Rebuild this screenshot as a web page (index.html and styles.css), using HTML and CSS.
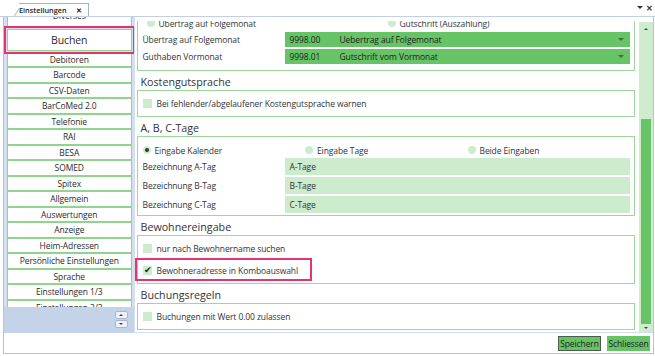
FILE: index.html
```html
<!DOCTYPE html>
<html lang="de">
<head>
    <meta charset="UTF-8">
    <title>Einstellungen</title>
    <link rel="stylesheet" href="styles.css">
</head>
<body>
    <div class="tabbar">
        <div class="tab">Einstellungen <span class="tab-close">✕</span></div>
        <div class="tab-tools"><span class="tools-arrow"></span> ✕</div>
    </div>

    <div class="window">
        <div class="panes">
            <aside class="sidebar">
                <div class="nav">
                    <div class="nav-list">
                        <div class="nav-item partial">Diverses</div>
                        <div class="nav-item active">Buchen</div>
                        <div class="nav-item">Debitoren</div>
                        <div class="nav-item">Barcode</div>
                        <div class="nav-item">CSV-Daten</div>
                        <div class="nav-item">BarCoMed 2.0</div>
                        <div class="nav-item">Telefonie</div>
                        <div class="nav-item">RAI</div>
                        <div class="nav-item">BESA</div>
                        <div class="nav-item">SOMED</div>
                        <div class="nav-item">Spitex</div>
                        <div class="nav-item">Allgemein</div>
                        <div class="nav-item">Auswertungen</div>
                        <div class="nav-item">Anzeige</div>
                        <div class="nav-item">Heim-Adressen</div>
                        <div class="nav-item">Persönliche Einstellungen</div>
                        <div class="nav-item">Sprache</div>
                        <div class="nav-item">Einstellungen 1/3</div>
                        <div class="nav-item">Einstellungen 2/3</div>
                    </div>
                </div>
                <div class="nav-scroll">
                    <button class="nav-btn"><span class="tri-up"></span></button>
                    <button class="nav-btn"><span class="tri-down"></span></button>
                </div>
            </aside>

            <div class="content">
                <div class="scroll-area">
                    <div class="scroll-inner">
                        <div class="group first-group">
                            <div class="radio-row top-radios">
                                <label class="radio"><span class="dot"></span>Übertrag auf Folgemonat</label>
                                <label class="radio"><span class="dot"></span>Gutschrift (Auszahlung)</label>
                            </div>
                            <div class="field-row">
                                <span class="label">Übertrag auf Folgemonat</span>
                                <div class="combo">
                                    <span class="combo-code">9998.00</span>
                                    <span class="combo-text">Uebertrag auf Folgemonat</span>
                                    <span class="combo-arrow"></span>
                                </div>
                            </div>
                            <div class="field-row">
                                <span class="label">Guthaben Vormonat</span>
                                <div class="combo">
                                    <span class="combo-code">9998.01</span>
                                    <span class="combo-text">Gutschrift vom Vormonat</span>
                                    <span class="combo-arrow"></span>
                                </div>
                            </div>
                        </div>

                        <h2 class="group-title">Kostengutsprache</h2>
                        <div class="group">
                            <label class="check"><span class="box"></span>Bei fehlender/abgelaufener Kostengutsprache warnen</label>
                        </div>

                        <h2 class="group-title">A, B, C-Tage</h2>
                        <div class="group">
                            <div class="radio-row abc-radios">
                                <label class="radio"><span class="dot checked"></span>Eingabe Kalender</label>
                                <label class="radio"><span class="dot"></span>Eingabe Tage</label>
                                <label class="radio"><span class="dot"></span>Beide Eingaben</label>
                            </div>
                            <div class="field-row tall">
                                <span class="label">Bezeichnung A-Tag</span>
                                <div class="input">A-Tage</div>
                            </div>
                            <div class="field-row tall">
                                <span class="label">Bezeichnung B-Tag</span>
                                <div class="input">B-Tage</div>
                            </div>
                            <div class="field-row tall">
                                <span class="label">Bezeichnung C-Tag</span>
                                <div class="input">C-Tage</div>
                            </div>
                        </div>

                        <h2 class="group-title">Bewohnereingabe</h2>
                        <div class="group">
                            <label class="check"><span class="box"></span>nur nach Bewohnername suchen</label>
                            <label class="check marked"><span class="box checked"></span>Bewohneradresse in Komboauswahl</label>
                        </div>

                        <h2 class="group-title">Buchungsregeln</h2>
                        <div class="group">
                            <label class="check"><span class="box"></span>Buchungen mit Wert 0.00 zulassen</label>
                        </div>
                    </div>
                </div>

                <div class="scrollbar">
                    <span class="tri-up small"></span>
                    <div class="track">
                        <div class="thumb"></div>
                    </div>
                    <span class="tri-down small"></span>
                </div>
            </div>
        </div>

        <div class="footer">
            <button class="btn btn-default">Speichern</button>
            <button class="btn">Schliessen</button>
        </div>
    </div>
</body>
</html>
```

FILE: styles.css
```css
body {
    margin: 0;
    background-color: #ffffff;
    font-family: "Open Sans", "Noto Sans", sans-serif;
    color: #333333;
    font-size: 8.5px;
    letter-spacing: -0.1px;
}

/* tab strip */
.tabbar {
    height: 16px;
    border-bottom: 1px solid #c3cfe2;
    display: flex;
    justify-content: space-between;
    align-items: flex-end;
}

.tab {
    position: relative;
    margin-left: 19px;
    height: 12px;
    padding: 0 6px 0 0;
    background-color: #ffffff;
    border-top: 1px solid #a7b2c3;
    border-right: 1px solid #a7b2c3;
    font-size: 7.3px;
    font-weight: 600;
    line-height: 12px;
    color: #222222;
    letter-spacing: 0;
}

.tab::before {
    content: "";
    position: absolute;
    left: -5px;
    top: -1px;
    bottom: 0;
    width: 8px;
    border-left: 1px solid #a7b2c3;
    border-top: 1px solid #a7b2c3;
    transform: skewX(-32deg);
    transform-origin: bottom left;
    background-color: #ffffff;
    z-index: -1;
}

.tab-close {
    margin-left: 7px;
    font-size: 7px;
}

.tab-tools {
    align-self: flex-start;
    margin-top: 2px;
    margin-right: 2px;
    font-size: 8px;
    font-weight: 600;
    display: flex;
    align-items: center;
    gap: 3px;
}

.tools-arrow {
    width: 0;
    height: 0;
    border-left: 3px solid transparent;
    border-right: 3px solid transparent;
    border-top: 3px solid #333333;
}

/* window */
.window {
    margin-left: 3px;
    width: 649px;
    height: 336px;
    border-left: 1px solid #b9c2cf;
    border-right: 1px solid #b9c2cf;
    border-bottom: 1px solid #b9c2cf;
    display: flex;
    flex-direction: column;
}

.panes {
    height: 316px;
    display: flex;
}

/* sidebar */
.sidebar {
    width: 131px;
    display: flex;
    flex-direction: column;
    background-color: #c5d3e8;
    border-right: 1px solid #d6dfee;
}

.nav {
    flex: 1;
    overflow: hidden;
    padding: 0 2px 0 3px;
    background-color: #d4dff0;
}

.nav-list {
    margin-top: -6px;
}

.nav-item {
    height: 15.5px;
    box-sizing: border-box;
    border: 1px solid #8fd48f;
    background-color: #ffffff;
    text-align: center;
    font-size: 8.5px;
    line-height: 13px;
    white-space: nowrap;
    overflow: hidden;
    color: #2b2b2b;
}

.nav-item.partial {
    line-height: 8px;
}

.nav-item.active {
    height: 22px;
    margin: 2px 0 1px;
    font-size: 10.5px;
    line-height: 20px;
    outline: 2px solid #e8336e;
    outline-offset: 1px;
    position: relative;
}

.nav-scroll {
    height: 26px;
    display: flex;
    flex-direction: column;
    align-items: flex-end;
    gap: 1px;
    padding: 4px 6px 0 0;
    box-sizing: border-box;
}

.nav-btn {
    width: 13px;
    height: 8px;
    padding: 0;
    border: 1px solid #a9b7cc;
    border-radius: 2px;
    background-color: #eef2f8;
    display: flex;
    align-items: center;
    justify-content: center;
}

.tri-up,
.tri-down {
    width: 0;
    height: 0;
    border-left: 2px solid transparent;
    border-right: 2px solid transparent;
}

.tri-up {
    border-bottom: 2px solid #444444;
}

.tri-down {
    border-top: 2px solid #444444;
}

/* main content */
.content {
    flex: 1;
    display: flex;
    border-bottom: 1px solid #d3ddec;
}

.scroll-area {
    flex: 1;
    overflow: hidden;
    margin-top: 4px;
    padding: 0 4px 0 2px;
}

.scroll-inner {
    margin-top: -5px;
}

.group {
    border: 1px solid #9cd89c;
    padding: 0 4px 0 5px;
}

.first-group {
    padding-bottom: 4px;
}

.group-title {
    margin: 0;
    height: 19px;
    padding: 0 0 0 4px;
    font-size: 10.7px;
    font-weight: normal;
    line-height: 22px;
    letter-spacing: 0;
    color: #333333;
}

.radio-row {
    display: flex;
    align-items: center;
}

.top-radios {
    height: 12px;
    margin-bottom: 3px;
}

.top-radios .radio:first-child {
    width: 245px;
    padding-left: 4px;
}

.abc-radios {
    height: 16px;
    margin-top: 5px;
}

.abc-radios .radio {
    width: 162.5px;
    padding-left: 0;
}

.radio {
    display: flex;
    align-items: center;
    box-sizing: border-box;
}

.dot {
    width: 8px;
    height: 8px;
    border-radius: 50%;
    background-color: #cdeccd;
    margin-right: 4px;
    display: flex;
    align-items: center;
    justify-content: center;
}

.dot.checked::after {
    content: "";
    width: 4px;
    height: 4px;
    border-radius: 50%;
    background-color: #333333;
}

.field-row {
    display: grid;
    grid-template-columns: 142px 1fr;
    align-items: center;
    height: 15px;
    margin-bottom: 2px;
}

.field-row.tall {
    height: 17px;
}

.combo {
    height: 15px;
    background-color: #66c466;
    display: flex;
    align-items: center;
    padding: 0 6px 0 5px;
    color: #222222;
}

.combo-code {
    width: 50px;
}

.combo-text {
    flex: 1;
}

.combo-arrow {
    width: 0;
    height: 0;
    border-left: 3px solid transparent;
    border-right: 3px solid transparent;
    border-top: 3px solid #3f6e3f;
}

.input {
    height: 17px;
    line-height: 17px;
    background-color: #cdebcd;
    padding-left: 5px;
}

.check {
    display: flex;
    align-items: center;
    height: 19px;
    margin: 3px 0;
}

.check + .check {
    margin-top: 0;
}

.box {
    width: 9px;
    height: 9px;
    background-color: #cdeccd;
    margin-right: 5px;
    position: relative;
}

.box.checked::after {
    content: "✔";
    position: absolute;
    left: 1px;
    top: -3px;
    font-size: 9px;
    color: #222222;
}

.check.marked {
    position: relative;
}

.check.marked::after {
    content: "";
    position: absolute;
    left: -8px;
    top: -3px;
    width: 177px;
    height: 23px;
    box-sizing: border-box;
    border: 2px solid #e8336e;
}

/* scrollbar */
.scrollbar {
    width: 14px;
    background-color: #cfeccf;
    display: flex;
    flex-direction: column;
    align-items: center;
    margin-top: 5px;
    padding: 6px 0 3px;
    box-sizing: border-box;
}

.scrollbar .small {
    flex: none;
}

.track {
    flex: 1;
    width: 10px;
    display: flex;
    flex-direction: column;
    justify-content: flex-end;
    padding: 4px 0 3px;
}

.thumb {
    height: 205px;
    background-color: #66c466;
}

/* footer */
.footer {
    flex: 1;
    display: flex;
    justify-content: flex-end;
    align-items: center;
    gap: 6px;
    padding-right: 3px;
}

.btn {
    width: 43px;
    height: 15px;
    padding: 0;
    border: 1px solid #66c466;
    background-color: #66c466;
    font-family: "Open Sans", sans-serif;
    font-size: 8.5px;
    letter-spacing: -0.1px;
    color: #222222;
}

.btn-default {
    border-color: #4d5a4d;
}
```
